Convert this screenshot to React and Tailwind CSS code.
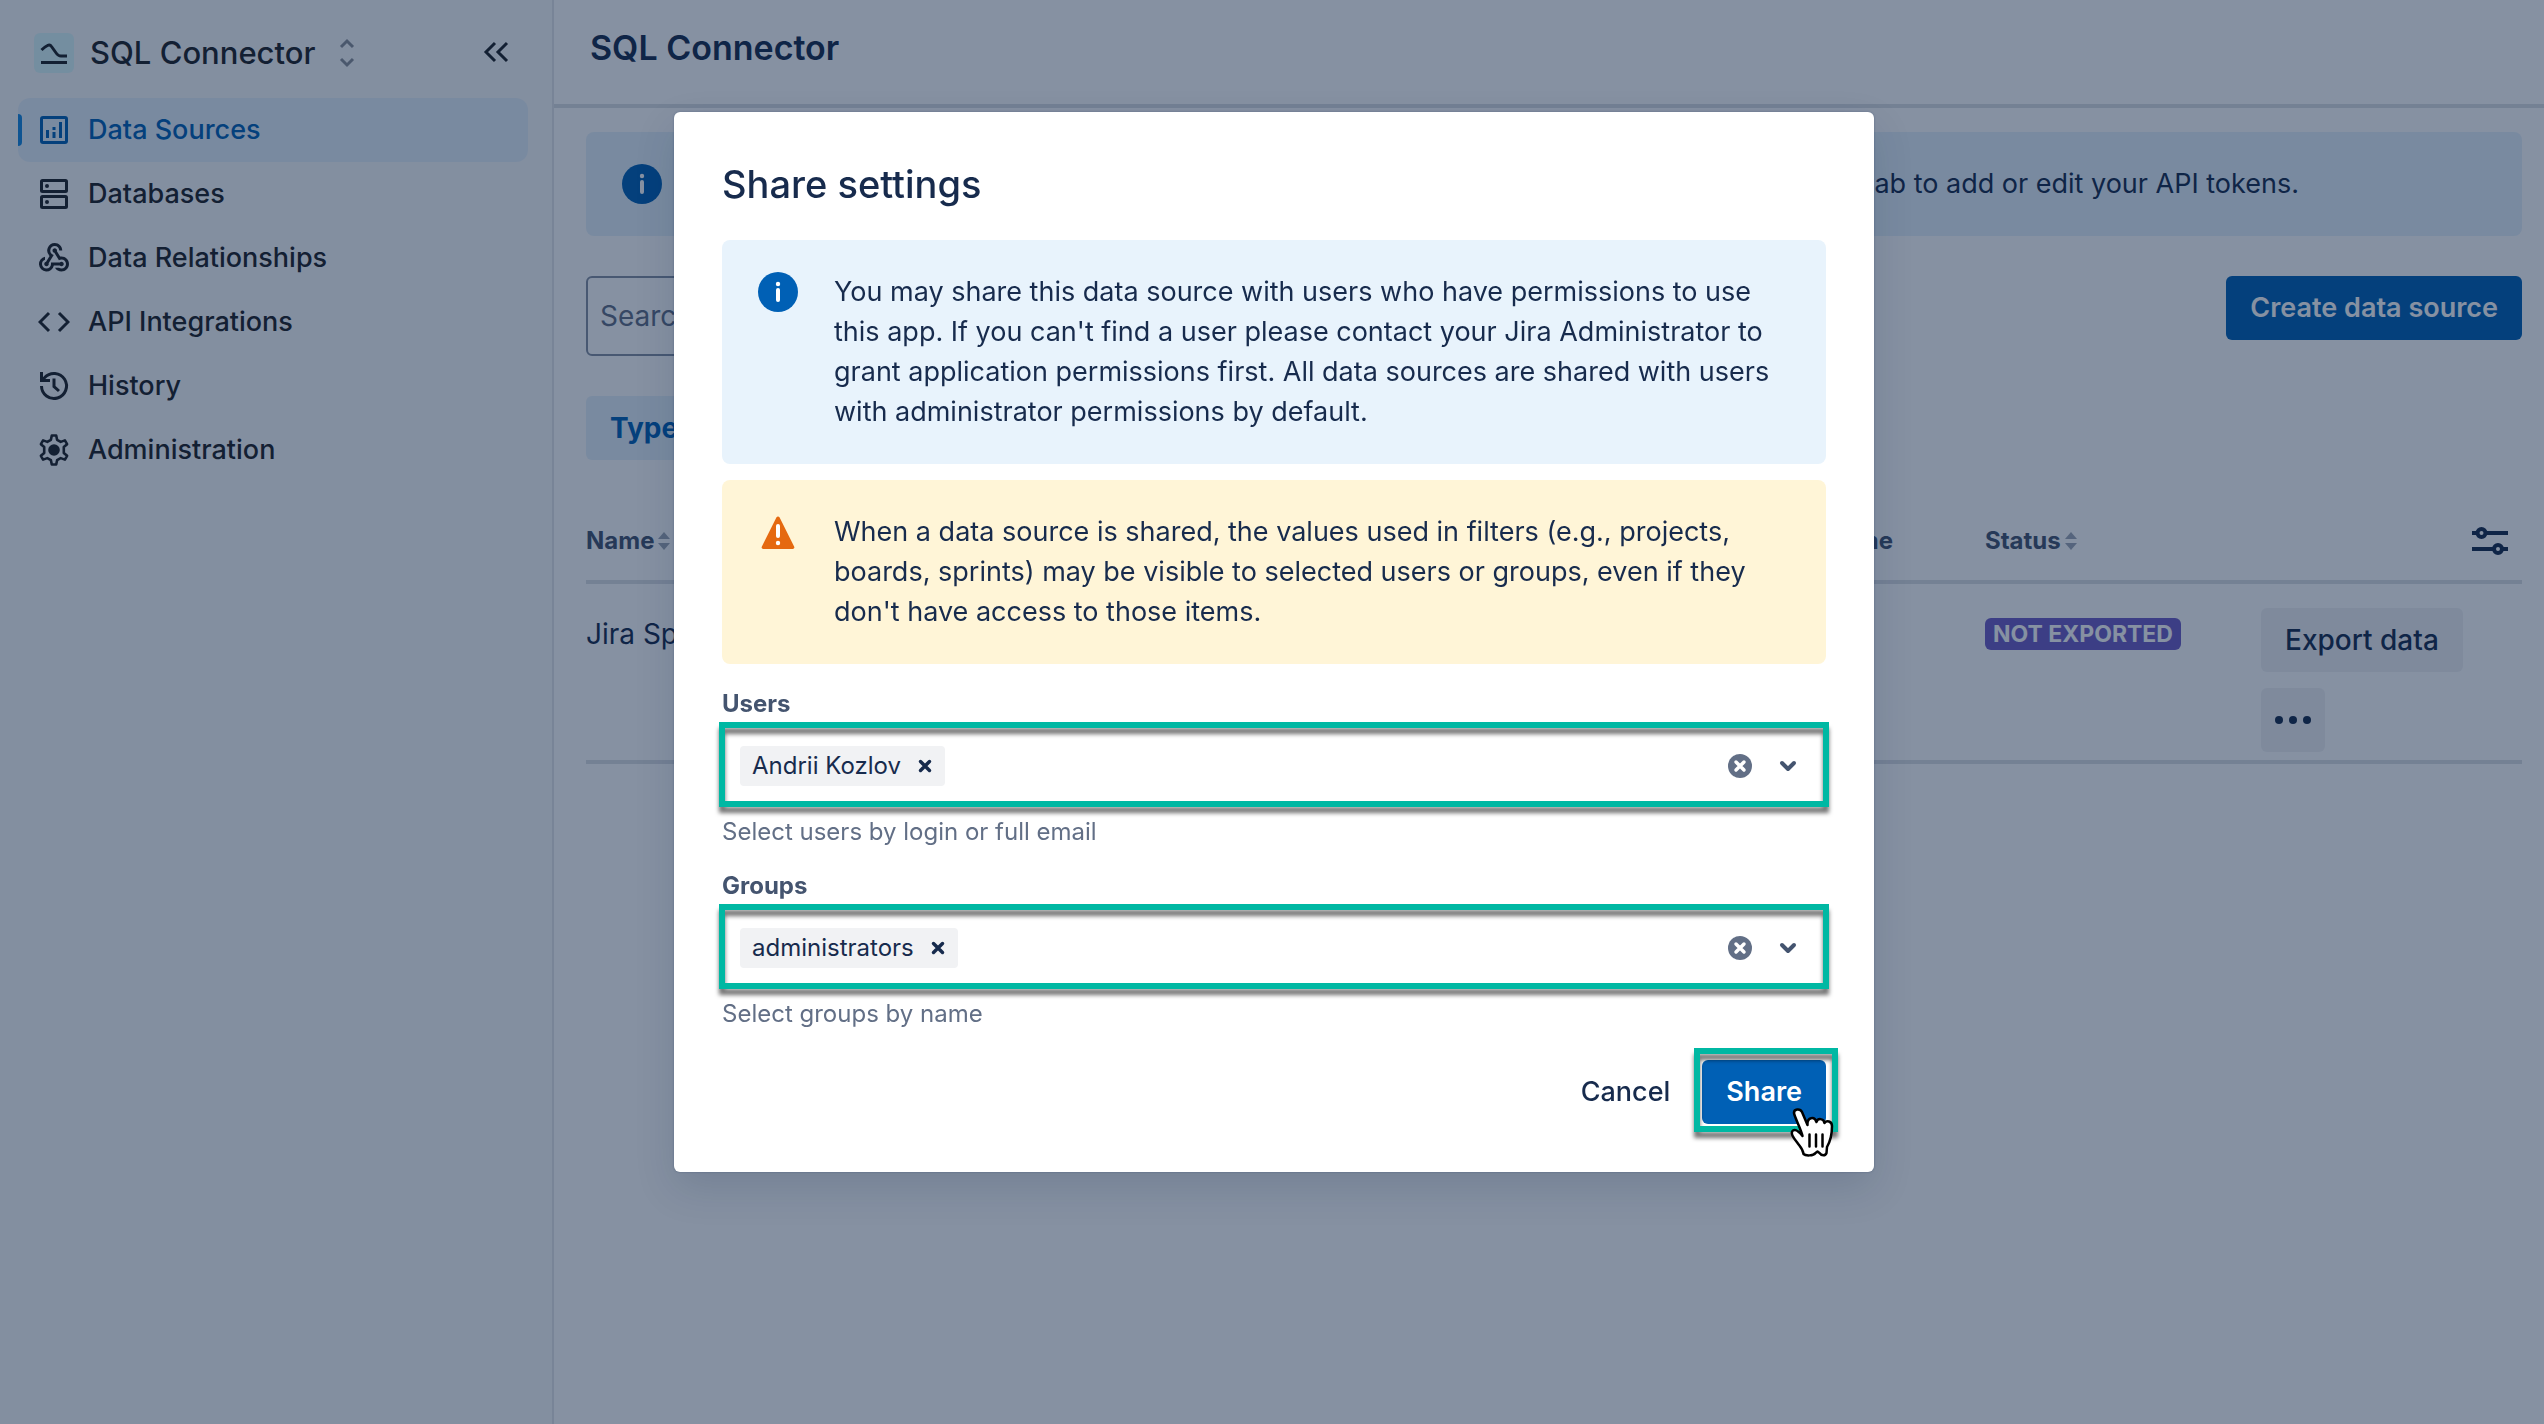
import React from "react";
import { MdWebhook } from "react-icons/md";

const stroke = { fill: "none", stroke: "currentColor" };

function LogoIcon() {
  return (
    <svg viewBox="0 0 40 40" className="size-10 rounded-md bg-[#dcfafc]" {...stroke} strokeWidth="3">
      <path d="M7.500 17c2-2 4-3.500 6-4.500 1.500-.8 3-.5 4 1l5 7c1.200 1.700 2.500 2.500 4.500 2.500h6" />
      <path d="M7 29.500h26" />
    </svg>
  );
}

function DataSourcesIcon() {
  return (
    <svg viewBox="0 0 32 32" className="size-8" {...stroke} strokeWidth="3">
      <rect x="3.500" y="3.500" width="25" height="25" rx="1.500" />
      <path d="M9.500 16v8M16 18v6M16 13v3M22.500 8v16" />
    </svg>
  );
}

function DatabasesIcon() {
  return (
    <svg viewBox="0 0 32 32" className="size-8" {...stroke} strokeWidth="3">
      <rect x="3.500" y="2.500" width="25" height="11" rx="1" />
      <rect x="3.500" y="18.500" width="25" height="11" rx="1" />
      <circle cx="9" cy="8" r="2" fill="currentColor" stroke="none" />
      <circle cx="9" cy="24" r="2" fill="currentColor" stroke="none" />
    </svg>
  );
}

function CodeIcon() {
  return (
    <svg viewBox="0 0 32 32" className="size-8" {...stroke} strokeWidth="3">
      <path d="M11 7l-9 9 9 9M21 7l9 9-9 9" />
    </svg>
  );
}

function HistoryIcon() {
  return (
    <svg viewBox="0 0 32 32" className="size-8" {...stroke} strokeWidth="3">
      <path d="M3.500 16a12.500 12.500 0 1 0 3.200-8.400L3.500 11" />
      <path d="M3.500 2v8.500H12" />
      <path d="M16 8.500v8l5 4.500" />
    </svg>
  );
}

function GearIcon() {
  return (
    <svg viewBox="0 0 32 32" className="size-8" {...stroke} strokeWidth="2.600" strokeLinejoin="round">
      <path d="M13.800 1.500h4.400l.9 4.300 3.600 2.100 4.200-1.500 2.200 3.800-3.300 2.900v5.800l3.300 2.900-2.200 3.800-4.200-1.500-3.600 2.100-.9 4.300h-4.400l-.9-4.300-3.600-2.100-4.200 1.500-2.200-3.800 3.300-2.900v-5.800L2.900 10.200l2.200-3.800 4.200 1.500 3.600-2.100z" />
      <circle cx="16" cy="16" r="5.800" fill="currentColor" stroke="none" />
    </svg>
  );
}

function InfoIcon() {
  return (
    <svg viewBox="0 0 40 40" className="size-10 shrink-0">
      <circle cx="20" cy="20" r="20" fill="#0060b5" />
      <circle cx="20" cy="12" r="2.200" fill="#fff" />
      <rect x="18" y="16" width="4" height="14" rx="2" fill="#fff" />
    </svg>
  );
}

function WarningIcon() {
  return (
    <svg viewBox="0 0 40 40" className="size-10 shrink-0">
      <path d="M18.500 5.200a1.800 1.800 0 0 1 3 0l14.600 29.300c.7 1.400 0 2.500-1.500 2.500H5.400c-1.500 0-2.200-1.100-1.500-2.500z" fill="#e56910" />
      <rect x="18" y="12" width="4" height="14" rx="2" fill="#fff" />
      <circle cx="20" cy="31" r="2.200" fill="#fff" />
    </svg>
  );
}

function SortIcon() {
  return (
    <svg viewBox="0 0 12 18" className="h-[18px] w-3 opacity-50" fill="currentColor">
      <path d="M6 0l6 7H0zM6 18l6-7H0z" />
    </svg>
  );
}

function HandCursor() {
  return (
    <svg viewBox="0 0 44 50" className="pointer-events-none absolute -right-2 -bottom-[34px] h-[50px] w-11">
      <path
        d="M12.500 28C11 21 4.500 9 4 5c-.3-4 6-5 8-1l5.500 13c-.5-8 7-9 9-3 1-4 7-4 8 1 2-3 7.500-2 7.500 3 0 9-1 14-5 21l-.5 6c-1 3-5 3-7 0l-2-1.500-2 1.500c-2 3-10 3-12 1-.5-5-3-7-6-11-3-4-8-10-4.500-12.500 3-2 6 1 9.500 5.500z"
        fill="#fff" stroke="#000" strokeWidth="2.500" strokeLinejoin="round"
      />
      <path d="M19.500 26.500v12M26 26.500v12M32.500 26.500v12" stroke="#000" strokeWidth="2.500" strokeLinecap="round" />
    </svg>
  );
}

const navItems = [
  { label: "Data Sources", icon: <DataSourcesIcon />, active: true },
  { label: "Databases", icon: <DatabasesIcon /> },
  { label: "Data Relationships", icon: <MdWebhook className="-mx-0.5 size-9" /> },
  { label: "API Integrations", icon: <CodeIcon /> },
  { label: "History", icon: <HistoryIcon /> },
  { label: "Administration", icon: <GearIcon /> },
];

function Sidebar() {
  return (
    <aside className="flex w-[554px] shrink-0 flex-col border-r-2 border-[#e3e5e9] bg-[#fafbfc] pr-6 pl-[18px] text-[#1f2226]">
      <div className="flex h-[98px] items-center pt-2 pr-4 pl-4">
        <LogoIcon />
        <span className="ml-4 text-[31px] leading-10 font-medium">SQL Connector</span>
        <button type="button" aria-label="Switch app" className="ml-6 text-[#8a8f98]">
          <svg viewBox="0 0 16 30" className="h-[30px] w-4" {...stroke} strokeWidth="3">
            <path d="M2 9l6-6 6 6M2 21l6 6 6-6" />
          </svg>
        </button>
        <button type="button" aria-label="Collapse sidebar" className="ml-auto">
          <svg viewBox="0 0 32 32" className="size-8" {...stroke} strokeWidth="3">
            <path d="M15 6l-9 9 9 9M27 6l-9 9 9 9" />
          </svg>
        </button>
      </div>
      <nav className="flex flex-col">
        {navItems.map((item) => (
          <a
            key={item.label}
            href="#"
            aria-current={item.active ? "page" : undefined}
            className={
              item.active
                ? "relative flex h-16 items-center gap-[18px] rounded-xl bg-[#e6f2fb] pl-5 text-[27px] leading-8 font-medium text-[#0060b5]"
                : "flex h-16 items-center gap-[18px] pl-5 text-[27px] leading-8 font-medium"
            }
          >
            {item.active && <span className="absolute left-0 h-8 w-1 rounded-r-sm bg-[#1488e0]" />}
            {item.icon}
            {item.label}
          </a>
        ))}
      </nav>
    </aside>
  );
}

function MainPage() {
  return (
    <main className="flex min-w-0 flex-1 flex-col">
      <header className="flex h-[108px] items-start border-b-4 border-[#dcdfe4] px-9 pt-6">
        <h1 className="text-[34px] leading-[48px] font-semibold">SQL Connector</h1>
      </header>
      <div className="flex flex-col pt-6 pr-[22px] pl-8">
        <section className="flex items-start rounded-lg bg-[#e6f2fb] p-8 pl-9">
          <InfoIcon />
          <p className="flex-1 pr-[191px] text-right text-[27px] leading-10">
            Use the API tokens tab to add or edit your API tokens.
          </p>
        </section>
        <div className="mt-10 flex items-start justify-between">
          <input
            type="text"
            aria-label="Search"
            placeholder="Search"
            className="h-20 w-[480px] rounded-md border-2 border-[#8590a2] bg-white px-3 text-[28px] placeholder:text-[#626f86]"
          />
          <button type="button" className="h-16 rounded-md bg-[#0060b5] px-6 text-[27px] font-semibold text-white">
            Create data source
          </button>
        </div>
        <div className="mt-10 flex">
          <button type="button" className="h-16 rounded-md bg-[#e6f2fb] px-6 text-[28px] font-bold text-[#0060b5]">
            Type
          </button>
        </div>
        <table className="mt-9 w-full table-fixed border-collapse text-left">
          <colgroup>
            <col />
            <col className="w-[420px]" />
            <col className="w-[276px]" />
            <col className="w-[261px]" />
          </colgroup>
          <thead>
            <tr className="h-[86px] border-b-4 border-[#dcdfe4] text-[24px] font-bold text-[#44546f]">
              <th scope="col" className="pt-1.5">
                <span className="flex items-center gap-1">Name <SortIcon /></span>
              </th>
              <th scope="col" className="pt-1.5 pr-[92px] text-right">Time</th>
              <th scope="col" className="pt-1.5">
                <span className="flex items-center gap-1">Status <SortIcon /></span>
              </th>
              <th scope="col" className="pt-1.5">
                <button type="button" aria-label="Configure columns" className="mr-3 ml-auto block text-[#172b4d]">
                  <svg viewBox="0 0 40 32" className="h-8 w-10" {...stroke} strokeWidth="4">
                    <path d="M2 8h5M16 8h22M2 24h22M33 24h5" />
                    <circle cx="11.500" cy="8" r="4" />
                    <circle cx="28" cy="24" r="4" />
                  </svg>
                </button>
              </th>
            </tr>
          </thead>
          <tbody>
            <tr className="border-b-4 border-[#dcdfe4] align-top">
              <td className="pt-[30px] text-[28px] leading-10">Jira Sprints</td>
              <td />
              <td className="pt-[34px]">
                <span className="flex h-8 w-fit items-center rounded-md bg-[#6e5dc6] px-2 text-[23px] font-bold text-white">
                  NOT EXPORTED
                </span>
              </td>
              <td className="pt-6 pb-2">
                <div className="flex flex-col items-start gap-4">
                  <button type="button" className="h-16 rounded-md bg-[#f1f2f4] px-6 text-[28px] font-medium">
                    Export data
                  </button>
                  <button type="button" aria-label="More actions" className="flex size-16 items-center justify-center rounded-md bg-[#f1f2f4]">
                    <svg viewBox="0 0 36 8" className="h-2 w-9" fill="currentColor">
                      <circle cx="4" cy="4" r="4" />
                      <circle cx="18" cy="4" r="4" />
                      <circle cx="32" cy="4" r="4" />
                    </svg>
                  </button>
                </div>
              </td>
            </tr>
          </tbody>
        </table>
      </div>
    </main>
  );
}

const ring =
  "pointer-events-none absolute border-[6px] border-[#00b8a3] drop-shadow-[0_6px_2px_rgba(0,0,0,0.55)]";

function PickerField({ id, label, value, hint }) {
  return (
    <div className="flex flex-col">
      <label htmlFor={id} className="text-[24px] leading-8 font-bold text-[#44546f]">
        {label}
      </label>
      <div className="relative mt-1.5 flex h-20 items-center rounded-md px-[18px]">
        <span className="flex h-10 items-center rounded bg-[#f1f2f4] px-3 text-[24px]">
          {value}
          <button type="button" aria-label={"Remove " + value} className="ml-4">
            <svg viewBox="0 0 16 16" className="size-4" {...stroke} strokeWidth="3.500" strokeLinecap="round">
              <path d="M3.500 3.500l9 9M12.500 3.500l-9 9" />
            </svg>
          </button>
        </span>
        <input id={id} type="text" className="mx-2 h-10 min-w-0 flex-1 text-[24px] outline-none" />
        <button type="button" aria-label={"Clear " + label} className="mr-6">
          <svg viewBox="0 0 24 24" className="size-6">
            <circle cx="12" cy="12" r="12" fill="#626f86" />
            <path d="M8 8l8 8M16 8l-8 8" stroke="#fff" strokeWidth="3.500" strokeLinecap="round" />
          </svg>
        </button>
        <button type="button" aria-label={"Open " + label} className="mr-2 text-[#44546f]">
          <svg viewBox="0 0 24 24" className="size-6" {...stroke} strokeWidth="4" strokeLinecap="round" strokeLinejoin="round">
            <path d="M6 9l6 6 6-6" />
          </svg>
        </button>
        <div className={ring + " inset-x-[-3px] -top-1 -bottom-px"} />
      </div>
      <p className="mt-2.5 text-[24px] leading-8 text-[#626f86]">{hint}</p>
    </div>
  );
}

function ShareDialog() {
  return (
    <div
      role="dialog"
      aria-modal="true"
      aria-labelledby="share-title"
      className="w-[1200px] rounded-md bg-white p-12 shadow-[0_16px_40px_rgba(9,30,66,0.14),0_0_2px_rgba(9,30,66,0.35)]"
    >
      <h2 id="share-title" className="text-[38px] leading-[48px] font-medium">Share settings</h2>
      <section className="mt-8 flex items-start gap-9 rounded-lg bg-[#e8f3fc] p-8 pl-9 text-[27px] leading-10">
        <InfoIcon />
        <p>
          You may share this data source with users who have permissions to use this app. If you can't find a user
          please contact your Jira Administrator to grant application permissions first. All data sources are shared
          with users with administrator permissions by default.
        </p>
      </section>
      <section className="mt-4 flex items-start gap-9 rounded-lg bg-[#fff5d7] p-8 pl-9 text-[27px] leading-10">
        <WarningIcon />
        <p>
          When a data source is shared, the values used in filters (e.g., projects, boards, sprints) may be visible to
          selected users or groups, even if they don't have access to those items.
        </p>
      </section>
      <div className="mt-6 flex flex-col gap-[22px]">
        <PickerField id="users" label="Users" value="Andrii Kozlov" hint="Select users by login or full email" />
        <PickerField id="groups" label="Groups" value="administrators" hint="Select groups by name" />
      </div>
      <div className="mt-[30px] flex justify-end gap-2">
        <button type="button" className="h-16 px-6 text-[27px] font-medium">Cancel</button>
        <div className="relative">
          <button type="button" className="h-16 rounded-md bg-[#0060b5] px-6 text-[27px] font-semibold text-white">
            Share
          </button>
          <div className={ring + " -top-3 -right-3 -bottom-2 -left-2"} />
          <HandCursor />
        </div>
      </div>
    </div>
  );
}

export default function App() {
  return (
    <div className="flex min-h-screen bg-white font-[Inter,sans-serif] text-[#172b4d]">
      <Sidebar />
      <MainPage />
      <div className="fixed inset-0 flex items-start justify-center bg-[rgba(9,30,66,0.49)] pt-28 pl-1">
        <ShareDialog />
      </div>
    </div>
  );
}
